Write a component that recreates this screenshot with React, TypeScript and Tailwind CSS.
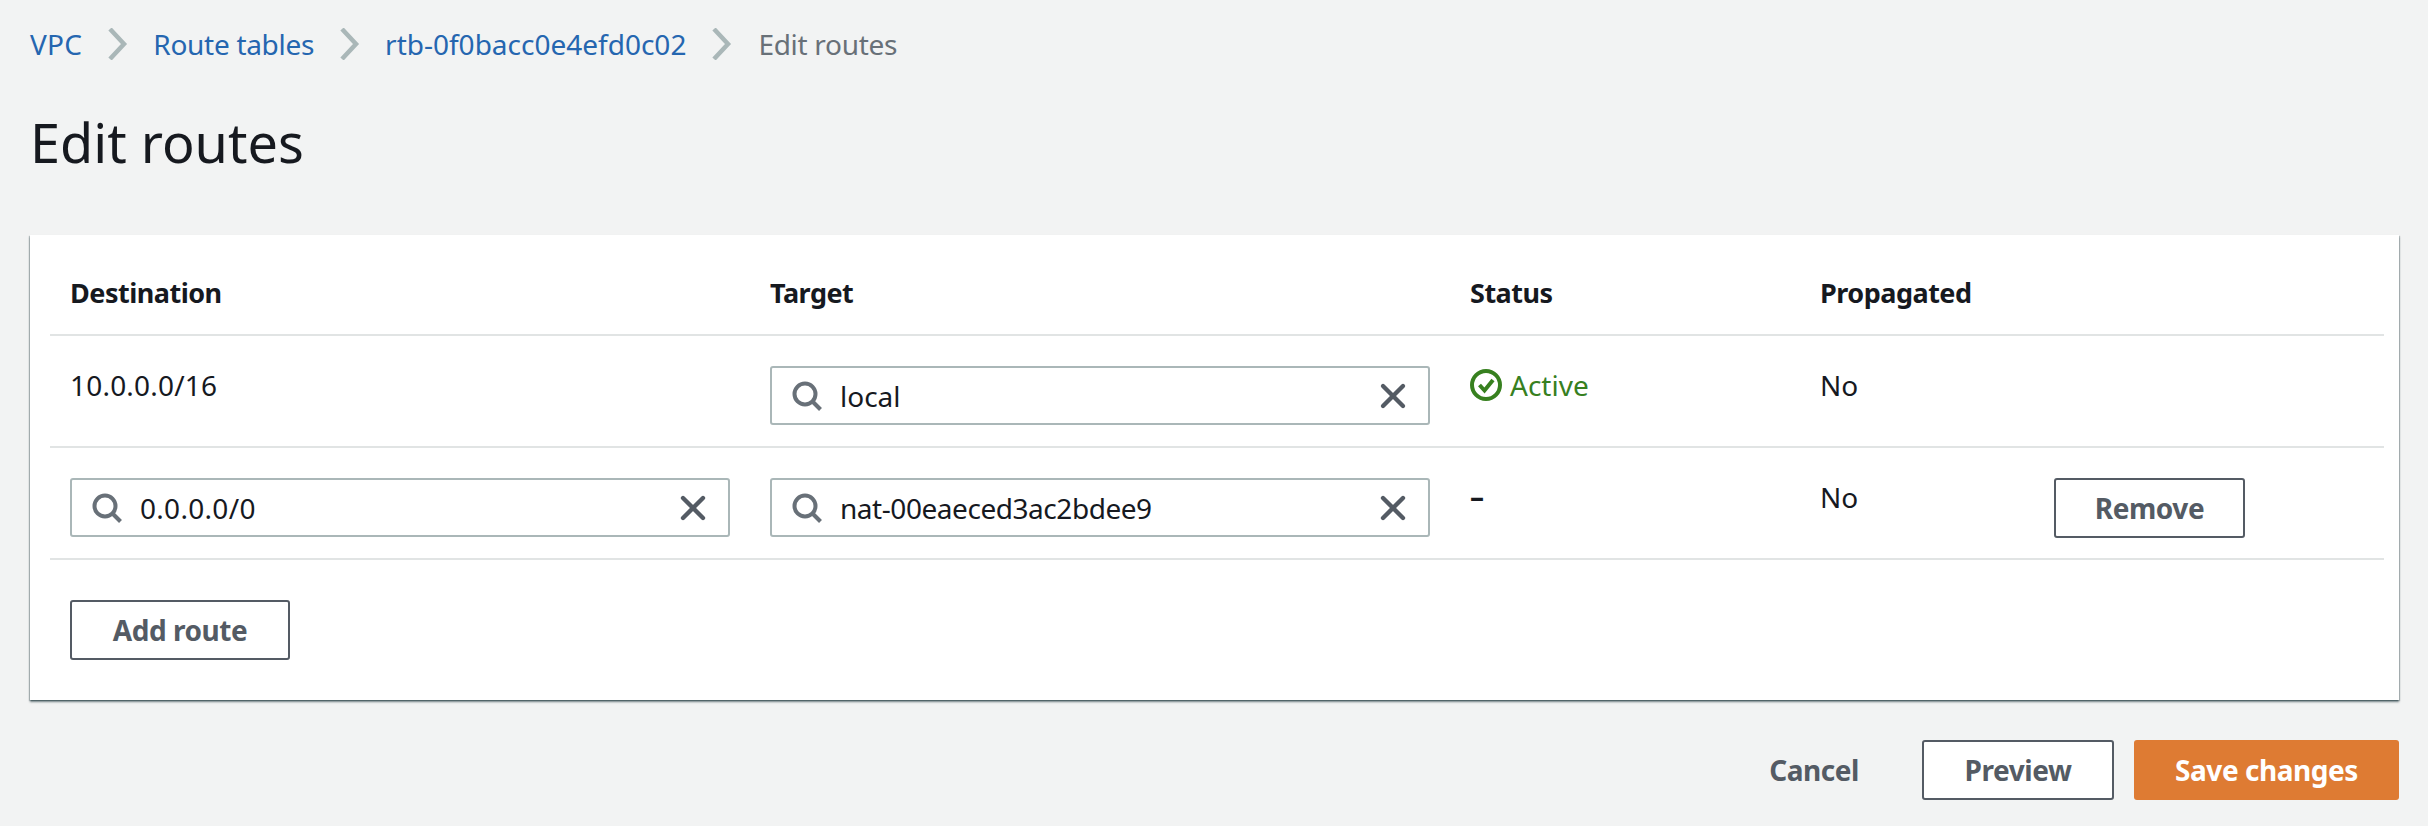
import { X } from 'lucide-react';

const ink = 'text-[#16191f]';
const headText = 'text-[27px] font-bold tracking-[-0.5px]';
const btnText = 'text-[28px] font-bold tracking-[-0.45px]';

function Chevron() {
  return (
    <svg width="20" height="32" viewBox="0 0 20 32" fill="none" className="shrink-0">
      <path d="M2 1 L16 16 L2 31" stroke="#aab7b8" strokeWidth="4.5" />
    </svg>
  );
}

function Crumbs() {
  return (
    <nav className="flex h-[40px] items-center text-[28px] text-[#2566b0]">
      <span className="tracking-[0.3px]">VPC</span>
      <span className="ml-[26px] mr-[25px]"><Chevron /></span>
      <span className="tracking-[-0.3px]">Route tables</span>
      <span className="ml-[26px] mr-[25px]"><Chevron /></span>
      <span>rtb-0f0bacc0e4efd0c02</span>
      <span className="ml-[26px] mr-[26px]"><Chevron /></span>
      <span className="tracking-[-0.3px] text-[#687078]">Edit routes</span>
    </nav>
  );
}

function SearchIcon() {
  return (
    <svg width="30" height="30" viewBox="0 0 30 30" fill="none" className="shrink-0">
      <circle cx="13" cy="13" r="10.5" stroke="#687078" strokeWidth="4" />
      <path d="M20.5 20.5 L28.5 28.5" stroke="#687078" strokeWidth="4" />
    </svg>
  );
}

function Field({ value, className, textClass }: { value: string; className: string; textClass?: string }) {
  return (
    <div className={`flex h-[59px] items-center rounded-[3px] border-2 border-[#aab7b8] bg-white pl-[20px] pr-[15px] ${className}`}>
      <SearchIcon />
      <span className={`ml-[18px] flex-1 text-[28px] ${ink} ${textClass ?? ''}`}>{value}</span>
      <X size={40} strokeWidth={2.6} className="shrink-0 text-[#545b64]" />
    </div>
  );
}

function Btn({ label, className }: { label: string; className: string }) {
  return (
    <button
      type="button"
      className={`flex h-[60px] items-center justify-center rounded-[3px] border-2 border-[#545b64] bg-white text-[#545b64] ${btnText} ${className}`}
    >
      {label}
    </button>
  );
}

export default function App() {
  return (
    <div
      className="h-[826px] w-[2428px] overflow-hidden bg-[#f2f3f3] pl-[30px] pr-[30px] pt-[24px]"
      style={{ fontFamily: '"Noto Sans", sans-serif' }}
    >
      <Crumbs />
      <h1 className={`mt-[42px] text-[54px] leading-[72px] font-normal ${ink}`}>Edit routes</h1>

      <div className="mt-[57px] h-[465px] w-[2369px] bg-white pl-[20px] pr-[15px] shadow-[0_2px_2px_0_rgba(0,28,36,0.5),1px_1px_1px_0_rgba(0,28,36,0.2),-1px_1px_1px_0_rgba(0,28,36,0.2)]">
        {/* header */}
        <div className={`grid h-[101px] grid-cols-[700px_700px_350px_1fr] items-center border-b-2 border-[#e1e4e4] pl-[20px] pt-[18px] ${headText} ${ink}`}>
          <div>Destination</div>
          <div>Target</div>
          <div>Status</div>
          <div>Propagated</div>
        </div>

        {/* local route */}
        <div className={`grid h-[112px] grid-cols-[700px_700px_350px_1fr] border-b-2 border-[#e1e4e4] pl-[20px] pt-[30px] text-[28px] ${ink}`}>
          <div className="-mt-[2px] tracking-[0.2px]">10.0.0.0/16</div>
          <div><Field value="local" className="w-[660px]" /></div>
          <div className="-mt-[1px] flex h-[40px] items-center text-[#37801f]">
            <svg width="32" height="32" viewBox="0 0 32 32" fill="none" className="mr-[8px]">
              <circle cx="16" cy="16" r="14" stroke="#37801f" strokeWidth="4" />
              <path d="M9.5 16 L14.5 21.5 L23 11" stroke="#37801f" strokeWidth="4" />
            </svg>
            Active
          </div>
          <div className="-mt-[2px]">No</div>
        </div>

        {/* nat route */}
        <div className={`grid h-[112px] grid-cols-[700px_700px_350px_234px_1fr] border-b-2 border-[#e1e4e4] pl-[20px] pt-[30px] text-[28px] ${ink}`}>
          <div><Field value="0.0.0.0/0" className="w-[660px]" textClass="tracking-[0.3px]" /></div>
          <div><Field value="nat-00eaeced3ac2bdee9" className="w-[660px]" textClass="tracking-[-0.45px]" /></div>
          <div className="-mt-[3px] font-bold">–</div>
          <div className="-mt-[2px]">No</div>
          <div><Btn label="Remove" className="w-[191px]" /></div>
        </div>

        <div className="pl-[20px] pt-[40px]">
          <Btn label="Add route" className="w-[220px]" />
        </div>
      </div>

      <div className="mt-[40px] flex w-[2369px] items-center justify-end">
        <span className={`mr-[63px] text-[#545b64] ${btnText}`}>Cancel</span>
        <Btn label="Preview" className="w-[192px]" />
        <button
          type="button"
          className={`ml-[20px] flex h-[60px] w-[265px] items-center justify-center rounded-[3px] bg-[#de7b33] text-white ${btnText}`}
        >
          Save changes
        </button>
      </div>
    </div>
  );
}
